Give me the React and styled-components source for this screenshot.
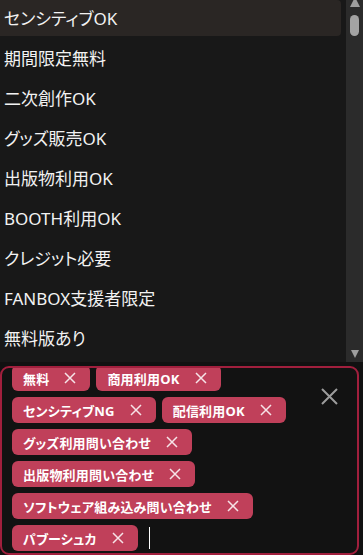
import React from 'react';
import styled, { createGlobalStyle } from 'styled-components';

const GlobalStyle = createGlobalStyle`
    html, body {
        margin: 0;
        padding: 0;
        background: #111111;
    }
    body {
        font-family: "Noto Sans", "Noto Sans CJK JP", sans-serif;
        font-feature-settings: "palt";
    }
`;

const Page = styled.div`
    width: 363px;
    height: 555px;
    display: flex;
    flex-direction: column;
    overflow: hidden;
    background: #111111;
`;

const ListBox = styled.div`
    height: 362px;
    display: flex;
    background: #181818;
    flex-shrink: 0;
`;

const Options = styled.ul`
    flex: 1;
    list-style: none;
    margin: 0;
    padding: 0 5px 0 0;
    display: flex;
    flex-direction: column;
    gap: 4px;
`;

const Option = styled.li`
    height: 36px;
    display: flex;
    align-items: center;
    padding: 0 0 2px 4px;
    box-sizing: border-box;
    font-size: 17px;
    color: #f2f2f2;
    border-radius: 0 4px 4px 0;
    background: ${(props) => (props.active ? '#2a2624' : 'transparent')};
`;

const ScrollTrack = styled.div`
    width: 17px;
    background: #2b2b2b;
    display: flex;
    flex-direction: column;
    align-items: center;
`;

const ArrowUp = styled.div`
    width: 0;
    height: 0;
    margin-top: -3px;
    border-left: 5px solid transparent;
    border-right: 5px solid transparent;
    border-bottom: 10px solid #9e9e9e;
`;

const Thumb = styled.div`
    width: 9px;
    height: 21px;
    margin-top: 8px;
    border-radius: 5px;
    background: #a3a3a3;
`;

const ArrowDown = styled.div`
    width: 0;
    height: 0;
    margin-top: auto;
    margin-bottom: 4px;
    border-left: 4px solid transparent;
    border-right: 4px solid transparent;
    border-top: 8px solid #9e9e9e;
`;

const Field = styled.div`
    margin-top: 4px;
    width: 359px;
    height: 189px;
    box-sizing: border-box;
    border: 2px solid #a11f3d;
    border-radius: 9px;
    background: #121212;
    display: flex;
    overflow: hidden;
`;

const TagArea = styled.div`
    flex: 1;
    display: flex;
    flex-direction: column;
    justify-content: flex-end;
    overflow: hidden;
    padding: 0 0 2px 10px;
`;

const TagWrap = styled.div`
    display: flex;
    flex-wrap: wrap;
    align-items: center;
    gap: 6px;
`;

const Tag = styled.span`
    height: 26px;
    display: inline-flex;
    align-items: center;
    gap: 15px;
    padding: 0 14px 0 11px;
    border-radius: 6px;
    background: #c0405a;
    color: #ffffff;
    font-size: 13px;
    font-weight: 700;
    letter-spacing: 0.2px;
    white-space: nowrap;
`;

const Caret = styled.span`
    width: 1px;
    height: 22px;
    margin-left: 5px;
    background: #ffffff;
`;

const ClearWrap = styled.div`
    width: 36px;
    padding-top: 20px;
    display: flex;
    justify-content: flex-start;
`;

const SmallX = () => (
    <svg width="12" height="12" viewBox="0 0 12 12">
        <path d="M1 1 L11 11 M11 1 L1 11" stroke="#f6e3e7" strokeWidth="1.5" fill="none" />
    </svg>
);

const BigX = () => (
    <svg width="17" height="17" viewBox="0 0 17 17">
        <path d="M1 1 L16 16 M16 1 L1 16" stroke="#9c9c9c" strokeWidth="2" fill="none" />
    </svg>
);

const options = [
    'センシティブOK',
    '期間限定無料',
    '二次創作OK',
    'グッズ販売OK',
    '出版物利用OK',
    'BOOTH利用OK',
    'クレジット必要',
    'FANBOX支援者限定',
    '無料版あり',
];

const tags = [
    '無料',
    '商用利用OK',
    'センシティブNG',
    '配信利用OK',
    'グッズ利用問い合わせ',
    '出版物利用問い合わせ',
    'ソフトウェア組み込み問い合わせ',
    'パブーシュカ',
];

export default function App() {
    return (
        <Page>
            <GlobalStyle />
            <ListBox>
                <Options>
                    {options.map((label, i) => (
                        <Option key={label} active={i === 0}>
                            {label}
                        </Option>
                    ))}
                </Options>
                <ScrollTrack>
                    <ArrowUp />
                    <Thumb />
                    <ArrowDown />
                </ScrollTrack>
            </ListBox>
            <Field>
                <TagArea>
                    <TagWrap>
                        {tags.map((t) => (
                            <Tag key={t}>
                                {t}
                                <SmallX />
                            </Tag>
                        ))}
                        <Caret />
                    </TagWrap>
                </TagArea>
                <ClearWrap>
                    <BigX />
                </ClearWrap>
            </Field>
        </Page>
    );
}
